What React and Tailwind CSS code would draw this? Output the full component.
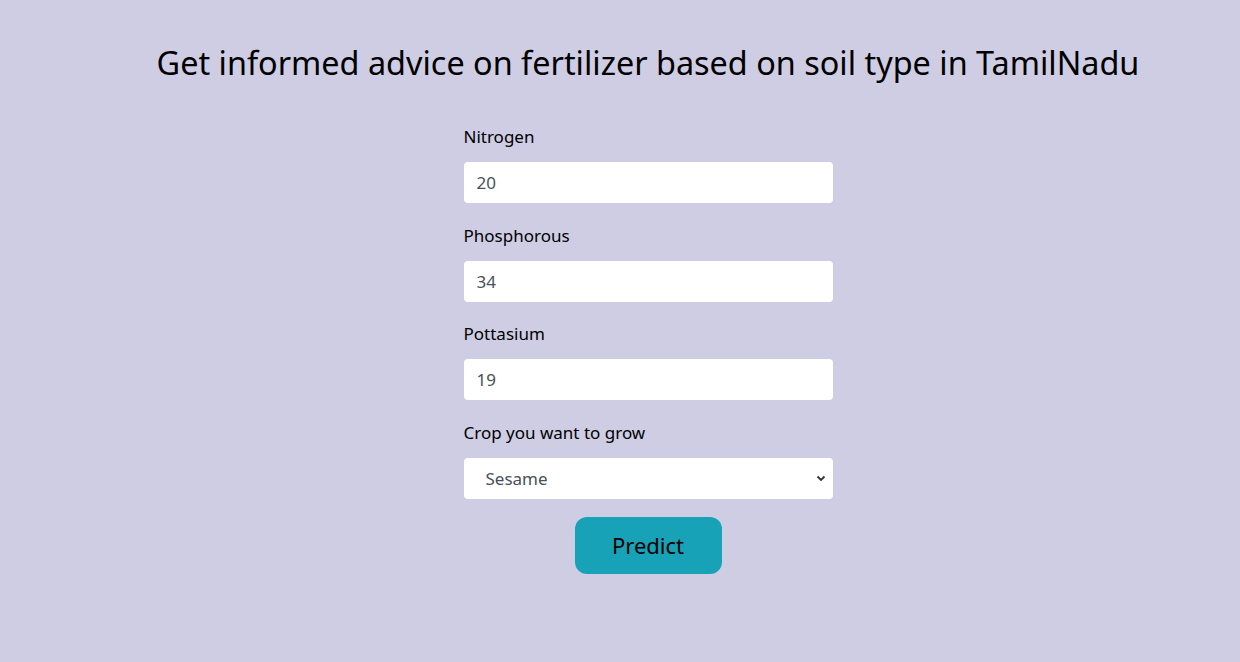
import React from "react";

export default function App() {
  const font = { fontFamily: '"Noto Sans", "Open Sans", sans-serif' };
  return (
    <div className="min-h-[662px] w-full bg-[#cecde3] text-black" style={font}>
      <div className="flex flex-col items-center pl-[56px]">
        <h1 className="mt-[38px] text-[32.4px] leading-[48px] font-normal text-black">
          Get informed advice on fertilizer based on soil type in TamilNadu
        </h1>
        <form className="mt-[38px] flex w-[369px] flex-col">
          <label className="text-[17px] leading-[26px]">Nitrogen</label>
          <input
            defaultValue="20"
            className="mt-[12px] h-[41px] w-full rounded-[4px] bg-white px-[13px] text-[17px] text-[#495057] outline-none"
          />
          <label className="mt-[20px] text-[17px] leading-[26px]">Phosphorous</label>
          <input
            defaultValue="34"
            className="mt-[12px] h-[41px] w-full rounded-[4px] bg-white px-[13px] text-[17px] text-[#495057] outline-none"
          />
          <label className="mt-[19px] text-[17px] leading-[26px]">Pottasium</label>
          <input
            defaultValue="19"
            className="mt-[12px] h-[41px] w-full rounded-[4px] bg-white px-[13px] text-[17px] text-[#495057] outline-none"
          />
          <label className="mt-[20px] text-[17px] leading-[26px]">Crop you want to grow</label>
          <div className="relative mt-[12px] h-[41px] w-full rounded-[4px] bg-white">
            <select
              defaultValue="Sesame"
              className="h-full w-full appearance-none rounded-[4px] bg-transparent pl-[22px] text-[17px] text-[#495057] outline-none"
            >
              <option>Sesame</option>
            </select>
            <svg
              className="pointer-events-none absolute right-[6px] top-[15px]"
              width="12"
              height="10"
              viewBox="0 0 12 10"
            >
              <path d="M2.5 3.5 L6 7 L9.5 3.5" fill="none" stroke="#333" strokeWidth="1.8" />
            </svg>
          </div>
          <div className="mt-[18px] flex justify-center">
            <button
              type="button"
              className="h-[57px] w-[147px] rounded-[12px] bg-[#17a2b8] text-[22px] text-black"
            >
              Predict
            </button>
          </div>
        </form>
      </div>
    </div>
  );
}
